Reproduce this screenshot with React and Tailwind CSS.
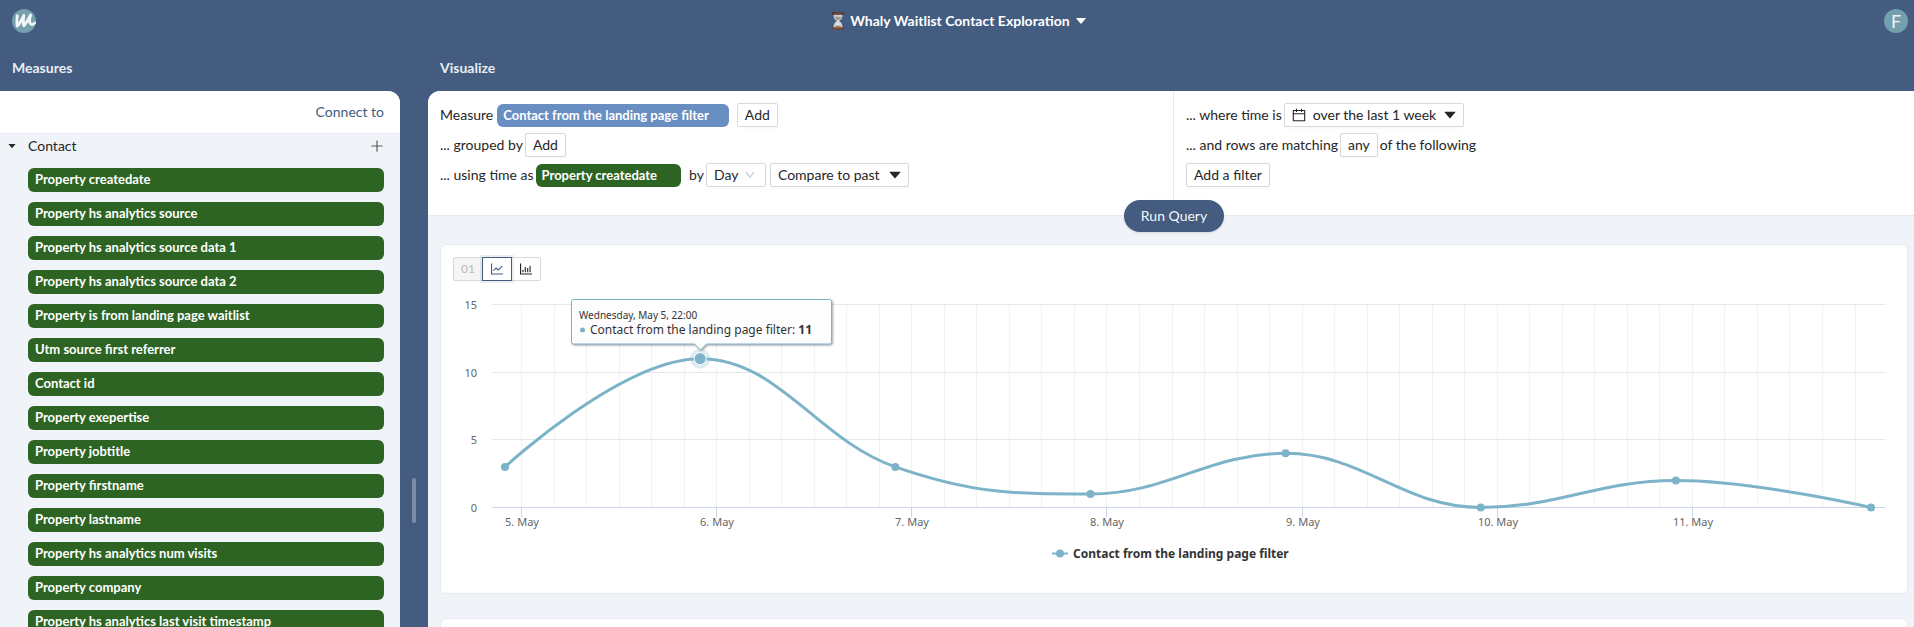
import React from "react";
import {
  AiFillCaretDown,
  AiOutlineBarChart,
  AiOutlineCalendar,
  AiOutlineDown,
  AiOutlineLineChart,
  AiOutlinePlus,
} from "react-icons/ai";

const PROPERTIES = [
  "Property createdate",
  "Property hs analytics source",
  "Property hs analytics source data 1",
  "Property hs analytics source data 2",
  "Property is from landing page waitlist",
  "Utm source first referrer",
  "Contact id",
  "Property exepertise",
  "Property jobtitle",
  "Property firstname",
  "Property lastname",
  "Property hs analytics num visits",
  "Property company",
  "Property hs analytics last visit timestamp",
];

const SERIES_NAME = "Contact from the landing page filter";
const VALUES = [3, 11, 3, 1, 4, 0, 2, 0];

// Plot area in the chart's own units
const PLOT = { left: 39, right: 1432, top: 19.5, bottom: 222.5, firstPoint: 52, firstTick: 68.5, day: 195.15 };
const yOf = (v) => PLOT.bottom - (v * (PLOT.bottom - PLOT.top)) / 15;
const POINTS = VALUES.map((v, i) => ({ x: PLOT.firstPoint + i * PLOT.day, y: yOf(v) }));

// Smooth curve that never overshoots its neighbouring points
function splinePath(pts) {
  const k = 1.5;
  let d = `M${pts[0].x} ${pts[0].y}`;
  let prev = pts[0];
  for (let i = 1; i < pts.length; i++) {
    const p = pts[i];
    const last = pts[i - 1];
    const next = pts[i + 1];
    let left = p;
    let right = p;
    if (next) {
      const lx = (k * p.x + last.x) / (k + 1);
      let ly = (k * p.y + last.y) / (k + 1);
      const rx = (k * p.x + next.x) / (k + 1);
      let ry = (k * p.y + next.y) / (k + 1);
      const c = ((ry - ly) * (rx - p.x)) / (rx - lx) + p.y - ry;
      ly += c;
      ry += c;
      const limit = (v, a, b) => Math.min(Math.max(v, Math.min(a, b)), Math.max(a, b));
      const ly2 = limit(ly, last.y, p.y);
      if (ly2 !== ly) {
        ly = ly2;
        ry = 2 * p.y - ly;
      }
      const ry2 = limit(ry, next.y, p.y);
      if (ry2 !== ry) {
        ry = ry2;
        ly = 2 * p.y - ry;
      }
      left = { x: lx, y: ly };
      right = { x: rx, y: ry };
    }
    d += `C${prev.x} ${prev.y} ${left.x} ${left.y} ${p.x} ${p.y}`;
    prev = right;
  }
  return d;
}

function Chart() {
  const minor = Array.from({ length: 42 }, (_, i) => Math.round(PLOT.firstTick + (i * PLOT.day) / 6 - 0.5) + 0.5);
  const days = ["5. May", "6. May", "7. May", "8. May", "9. May", "10. May", "11. May"];
  const hover = POINTS[1];
  return (
    <svg
      viewBox="0 0 1442 296"
      className="mt-1 block w-full font-['Noto_Sans','Open_Sans',sans-serif]"
      role="img"
      aria-label={SERIES_NAME}
    >
      <g strokeWidth="1" fill="none">
        {minor.map((x) => (
          <path key={x} d={`M${x} ${PLOT.top}V${PLOT.bottom}`} stroke="#f2f2f2" />
        ))}
        {[15, 10, 5].map((v) => (
          <path key={v} d={`M${PLOT.left} ${Math.floor(yOf(v)) + 0.5}H${PLOT.right}`} stroke="#e6e6ec" />
        ))}
        <path d={`M${PLOT.left} ${PLOT.bottom}H${PLOT.right}`} stroke="#ccd6eb" />
        {days.map((d, i) => (
          <path key={d} d={`M${minor[i * 6]} ${PLOT.bottom}v10`} stroke="#ccd6eb" />
        ))}
      </g>
      <g fill="#666666" fontSize="11">
        {[15, 10, 5, 0].map((v) => (
          <text key={v} x="24" y={Math.floor(yOf(v)) + 5} textAnchor="end">
            {v}
          </text>
        ))}
        {days.map((d, i) => (
          <text key={d} x={minor[i * 6] + 0.5} y="241" textAnchor="middle">
            {d}
          </text>
        ))}
      </g>

      <path d={splinePath(POINTS)} fill="none" stroke="#7cb3c8" strokeWidth="3" strokeLinejoin="round" />
      {POINTS.map((p, i) => (
        <circle key={i} cx={p.x} cy={p.y} r="4" fill="#7cb3c8" />
      ))}
      <circle cx={hover.x} cy={hover.y} r="10" fill="#7cb3c8" opacity="0.25" />
      <circle cx={hover.x} cy={hover.y} r="6" fill="#7cb3c8" stroke="#ffffff" strokeWidth="1" />

      <g className="drop-shadow-[1px_1px_1px_rgba(0,0,0,0.35)]">
        <path
          d="M120.500 14.500H376.500a2 2 0 0 1 2 2V57a2 2 0 0 1 -2 2H253.500l-6 6l-6 -6H120.500a2 2 0 0 1 -2 -2V16.500a2 2 0 0 1 2 -2Z"
          fill="#fdfdfd"
          stroke="#7cb3c8"
        />
      </g>
      <text x="126" y="34" fontSize="10" fill="#333333">
        Wednesday, May 5, 22:00
      </text>
      <circle cx="129.500" cy="45" r="2.500" fill="#7cb3c8" />
      <text x="137" y="49" fontSize="12" fill="#333333">
        {SERIES_NAME}: <tspan fontWeight="700">11</tspan>
      </text>

      <path d="M599 268.500h16" stroke="#7cb3c8" strokeWidth="2" />
      <circle cx="607" cy="268.500" r="4" fill="#7cb3c8" />
      <text x="620" y="273" fontSize="12" fontWeight="700" fill="#333333">
        {SERIES_NAME}
      </text>
    </svg>
  );
}

function Hourglass() {
  return (
    <svg viewBox="0 0 12 18" className="h-[18px] w-3" aria-hidden="true">
      <path d="M1.500 2.500h9c0 3.500-1 5-3.300 6.500c2.300 1.500 3.300 3 3.300 6.500h-9c0-3.500 1-5 3.300-6.500c-2.300-1.500-3.300-3-3.300-6.500Z" fill="#c9d3d8" />
      <path d="M2.600 4.800h6.800c-.5 1.800-1.600 2.800-3.400 3.900c-1.800-1.100-2.900-2.100-3.400-3.900Z" fill="#a39a86" />
      <path d="M5.600 8.500h.8v3.200l3 3.300h-6.800l3-3.300Z" fill="#f4f6f6" />
      <path d="M2.200 15.500c1-1.800 2.400-2.300 3.800-2.300s2.800.5 3.800 2.300Z" fill="#b98b62" />
      <rect x="0" y="0.300" width="12" height="2.400" rx="0.800" fill="#4f2f22" />
      <rect x="0" y="15.200" width="12" height="2.400" rx="0.800" fill="#6b4230" />
      <path d="M1.500 1.900h9M1.500 15.900h9" stroke="#b87a52" strokeWidth="0.700" />
    </svg>
  );
}

function Logo() {
  return (
    <svg viewBox="0 0 24 24" className="size-6" aria-hidden="true">
      <circle cx="12" cy="12" r="12" fill="#74a0ae" />
      <path
        d="M5.300 6.600C5 10 4.500 14.500 5.300 17C7.800 15 9.800 10.500 11.800 6.300C11.400 10 10.900 14.300 11.800 16.700C14.400 14.300 16.300 10 18.600 6C17.600 9.500 16.700 13.300 18.700 14.900C20 15.800 21.600 15.300 22.600 14"
        fill="none"
        stroke="#f3f6f8"
        strokeWidth="2.800"
        strokeLinecap="round"
        strokeLinejoin="round"
      />
    </svg>
  );
}

function Pill({ children, className }) {
  return (
    <button type="button" className={`flex items-center rounded-md text-left text-[13px] font-bold text-white ${className}`}>
      {children}
    </button>
  );
}

function SmallButton({ children }) {
  return (
    <button
      type="button"
      className="flex h-6 items-center rounded-xs border border-[#d9d9d9] bg-white px-[7px] shadow-[0_2px_0_rgba(0,0,0,0.015)]"
    >
      {children}
    </button>
  );
}

export default function App() {
  return (
    <div className="flex h-screen flex-col overflow-hidden bg-[#435c80] font-['Lato',sans-serif] text-sm text-[#262626]">
      <header className="flex h-[42px] shrink-0 items-center justify-between px-3">
        <a href="#home" aria-label="Whaly">
          <Logo />
        </a>
        <button type="button" className="flex items-center font-bold text-white">
          <Hourglass />
          <span className="ml-1.5">Whaly Waitlist Contact Exploration</span>
          <AiFillCaretDown className="ml-1" size={14} />
        </button>
        <button type="button" aria-label="Account" className="mr-[-6px] flex size-6 items-center justify-center rounded-full bg-[#74a0ae] text-lg text-[#eef3f6]">
          F
        </button>
      </header>

      <div className="flex min-h-0 flex-1">
        <aside className="flex w-[400px] shrink-0 flex-col">
          <h2 className="flex h-[49px] shrink-0 items-center px-3 pt-0.5 font-bold text-[#e9eef4]">Measures</h2>
          <div className="min-h-0 flex-1 overflow-hidden rounded-tr-xl bg-[#f0f4f8]">
            <div className="flex h-[43px] items-center justify-end border-b border-[#e6e9ed] bg-white px-4">
              <a href="#connect" className="text-[#435c80]">
                Connect to
              </a>
            </div>
            <div className="flex h-6 items-center pr-[15px] pl-[7px]">
              <button type="button" className="flex flex-1 items-center text-left">
                <AiFillCaretDown size={10} />
                <span className="ml-[11px]">Contact</span>
              </button>
              <button type="button" aria-label="Add measure" className="text-[#595959]">
                <AiOutlinePlus size={16} />
              </button>
            </div>
            <ul className="mt-2.5 flex flex-col gap-2.5 pr-4 pl-7">
              {PROPERTIES.map((p) => (
                <li key={p}>
                  <Pill className="h-6 w-full bg-[#2d6423] px-[7px] pb-0.5">{p}</Pill>
                </li>
              ))}
            </ul>
          </div>
        </aside>

        <div className="flex w-7 shrink-0 items-end justify-center pb-[104px]">
          <div className="h-[45px] w-1 rounded-sm bg-[#7b8ca6]" />
        </div>

        <main className="mr-[-6px] flex min-w-0 flex-1 flex-col">
          <h2 className="flex h-[49px] shrink-0 items-center px-3 pt-0.5 font-bold text-[#e9eef4]">Visualize</h2>
          <div className="min-h-0 flex-1 overflow-hidden rounded-tl-xl bg-[#f0f4f8]">
            <section className="border-b border-[#e6e9ed] bg-white pb-4">
              <div className="grid grid-cols-2">
                <div className="flex flex-col gap-1.5 border-r border-[#e8e8e8] p-3">
                  <div className="flex items-center gap-1">
                    <span>Measure</span>
                    <Pill className="mr-1 h-[23px] bg-[#688ec2] pr-5 pl-1.5">{SERIES_NAME}</Pill>
                    <SmallButton>Add</SmallButton>
                  </div>
                  <div className="flex items-center gap-0.5">
                    <span>... grouped by</span>
                    <SmallButton>Add</SmallButton>
                  </div>
                  <div className="flex items-center gap-0.5">
                    <span>... using time as</span>
                    <Pill className="mr-1.5 h-[23px] bg-[#2d6423] pr-6 pl-1.5">Property createdate</Pill>
                    <label htmlFor="granularity">by</label>
                    <div className="relative mr-0.5 flex items-center">
                      <select
                        id="granularity"
                        defaultValue="Day"
                        className="h-6 w-[60px] appearance-none rounded-xs border border-[#d9d9d9] bg-white pl-[7px]"
                      >
                        <option>Day</option>
                        <option>Week</option>
                        <option>Month</option>
                      </select>
                      <AiOutlineDown size={12} className="pointer-events-none absolute right-2.5 text-[#bfbfbf]" />
                    </div>
                    <SmallButton>
                      Compare to past <AiFillCaretDown className="mr-[-2px] ml-[7px]" size={16} />
                    </SmallButton>
                  </div>
                </div>
                <div className="flex flex-col items-start gap-1.5 p-3">
                  <div className="flex items-center gap-0.5">
                    <span>... where time is</span>
                    <SmallButton>
                      <AiOutlineCalendar className="-ml-px" size={16} />
                      <span className="ml-1.5">over the last 1 week</span>
                      <AiFillCaretDown className="mr-[-2px] ml-1.5" size={16} />
                    </SmallButton>
                  </div>
                  <div className="flex items-center gap-0.5">
                    <span>... and rows are matching</span>
                    <SmallButton>any</SmallButton>
                    <span>of the following</span>
                  </div>
                  <SmallButton>Add a filter</SmallButton>
                </div>
              </div>
            </section>

            <div className="relative -mt-4 flex justify-center">
              <button type="button" className="h-8 w-[100px] rounded-full bg-[#435c80] text-[#f3f6f9] shadow-sm">
                Run Query
              </button>
            </div>

            <div className="mt-3 flex flex-col gap-6 px-3">
              <section className="rounded-md border border-[#e6eaee] bg-white p-3">
                <div className="flex">
                  <button
                    type="button"
                    disabled
                    className="h-6 w-[30px] rounded-l-xs border border-[#d9d9d9] bg-[#f5f5f5] text-xs text-[#b8b8b8]"
                  >
                    01
                  </button>
                  <button
                    type="button"
                    aria-label="Line chart"
                    aria-pressed="true"
                    className="relative -ml-px flex h-6 w-[30px] items-center justify-center border border-[#435c80] bg-white text-[#435c80] shadow-[0_0_0_2px_rgba(67,92,128,0.1)]"
                  >
                    <AiOutlineLineChart size={16} />
                  </button>
                  <button
                    type="button"
                    aria-label="Bar chart"
                    className="-ml-px flex h-6 w-[30px] items-center justify-center rounded-r-xs border border-[#d9d9d9] bg-white"
                  >
                    <AiOutlineBarChart size={16} />
                  </button>
                </div>
                <Chart />
              </section>
              <section className="h-80 rounded-md border border-[#e6eaee] bg-white" />
            </div>
          </div>
        </main>
      </div>
    </div>
  );
}
